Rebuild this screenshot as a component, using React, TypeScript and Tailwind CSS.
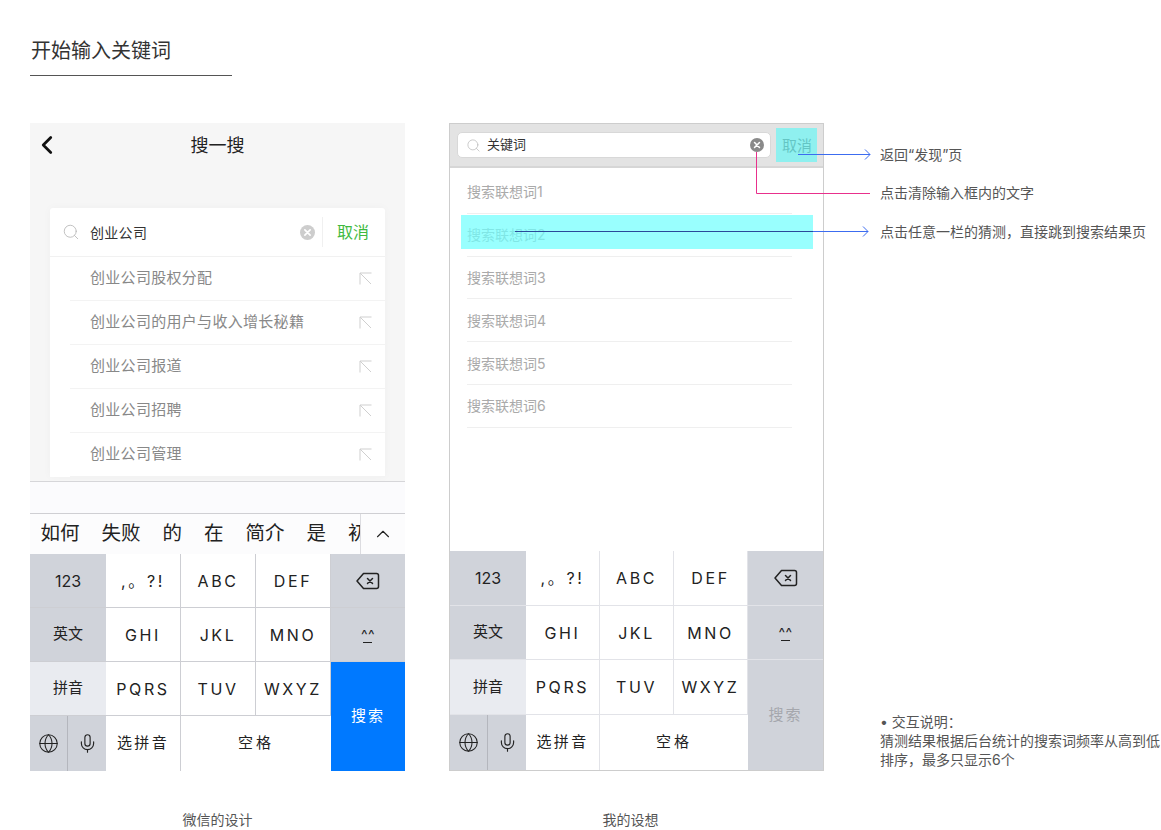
import { Globe, Mic, ChevronLeft, ChevronUp, Search } from "lucide-react";

function BackspaceIcon() {
  return (
    <svg width="24" height="18" viewBox="0 0 24 18" fill="none" stroke="#222" strokeWidth="1.5" strokeLinejoin="round" strokeLinecap="round">
      <path d="M7.5 1.5H20.5a2 2 0 0 1 2 2v11a2 2 0 0 1-2 2H7.5L1 9z" />
      <path d="M11.5 6.5l5 5M16.5 6.5l-5 5" />
    </svg>
  );
}

function ClearIcon({ size, bg }: { size: number; bg: string }) {
  return (
    <svg width={size} height={size} viewBox="0 0 16 16">
      <circle cx="8" cy="8" r="8" fill={bg} />
      <path d="M5.2 5.2l5.6 5.6M10.8 5.2l-5.6 5.6" stroke="#fff" strokeWidth="1.8" strokeLinecap="round" />
    </svg>
  );
}

function JumpIcon() {
  return (
    <svg width="13" height="13" viewBox="0 0 13 13" fill="none" stroke="#cfcfcf" strokeWidth="1">
      <path d="M1 12.5V1h11.5M1 1l11 11" />
    </svg>
  );
}

function Key({ children, className = "" }: { children: React.ReactNode; className?: string }) {
  return <div className={`flex items-center justify-center text-[#222] ${className}`}>{children}</div>;
}

function Keyboard({ grid, line, searchKey }: { grid: string; line: string; searchKey: string }) {
  const gray = "bg-[#d0d3da]";
  const letter = `bg-white text-[16px] tracking-[2.6px] border-r border-b ${line}`;
  const side = `${gray} text-[15px] border-b ${line}`;
  return (
    <div className={`grid shrink-0 ${grid}`}>
      <Key className={`${side} text-[16px]`}>123</Key>
      <Key className={letter}>,。?!</Key>
      <Key className={letter}>ABC</Key>
      <Key className={letter}>DEF</Key>
      <Key className={side}><BackspaceIcon /></Key>

      <Key className={side}>英文</Key>
      <Key className={letter}>GHI</Key>
      <Key className={letter}>JKL</Key>
      <Key className={letter}>MNO</Key>
      <Key className={side}>
        <div className="flex flex-col items-center">
          <span className="h-[12px] text-[14px] leading-[16px] tracking-[0.5px]">^^</span>
          <span className="mt-[3px] h-px w-[9px] bg-[#222]" />
        </div>
      </Key>

      <Key className={`bg-[#e9ebf0] text-[15px] border-b ${line}`}>拼音</Key>
      <Key className={letter}>PQRS</Key>
      <Key className={letter}>TUV</Key>
      <Key className={letter}>WXYZ</Key>
      <Key className={`row-span-2 text-[15px] tracking-[2px] ${searchKey}`}>搜索</Key>

      <div className={`flex ${gray}`}>
        <Key className="w-[38px] border-r border-[#b4b6bd]"><Globe size={21} strokeWidth={1.2} color="#222" /></Key>
        <Key className="flex-1"><Mic size={21} strokeWidth={1.3} color="#222" /></Key>
      </div>
      <Key className={`bg-white text-[15px] tracking-[2.4px] border-r ${line}`}>选拼音</Key>
      <Key className="col-span-2 bg-white text-[15px] tracking-[3px]">空格</Key>
    </div>
  );
}

const wechatRows = ["创业公司股权分配", "创业公司的用户与收入增长秘籍", "创业公司报道", "创业公司招聘", "创业公司管理"];
const candidates = ["如何", "失败", "的", "在", "简介", "是", "初"];
const myRows = ["搜索联想词1", "搜索联想词2", "搜索联想词3", "搜索联想词4", "搜索联想词5", "搜索联想词6"];

function WechatPhone() {
  return (
    <div className="flex h-[648px] w-[375px] shrink-0 flex-col bg-[#fbfbfd]">
      <div className="h-[358px] shrink-0 overflow-hidden bg-[#f6f6f6]">
        <div className="relative flex h-[44px] items-center justify-center">
          <ChevronLeft size={30} strokeWidth={2.2} color="#111" className="absolute left-[2px] top-[7px]" />
          <span className="text-[18px] text-[#222]">搜一搜</span>
        </div>
        <div className="ml-[20px] mt-[41px] w-[335px] rounded-t-[3px] bg-white shadow-[0_0_10px_rgba(0,0,0,0.03)]">
          <div className="flex h-[49px] items-center border-b border-[#f1f1f1] pl-[12px]">
            <Search size={18} strokeWidth={1.1} color="#b5b5b5" className="-scale-x-0 scale-x-100" />
            <span className="ml-[10px] flex-1 text-[14px] tracking-[0.3px] text-[#333]">创业公司</span>
            <ClearIcon size={15} bg="#cdcdcd" />
            <div className="ml-[7px] h-[30px] w-px bg-[#f0f0f0]" />
            <span className="ml-[14px] w-[48px] text-[16px] text-[#3fba3f]">取消</span>
          </div>
          {wechatRows.map((row) => (
            <div key={row} className="ml-[20px] flex h-[44px] items-center border-b border-[#f3f3f3] pl-[20px]">
              <span className="flex-1 text-[15px] tracking-[0.3px] text-[#888]">{row}</span>
              <span className="mr-[13px]"><JumpIcon /></span>
            </div>
          ))}
        </div>
      </div>
      <div className="h-[32px] shrink-0 border-t border-[#d6d6d9] bg-[#fbfbfd]" />
      <div className="flex h-[41px] shrink-0 border-t border-[#cfcfd3] bg-[#fcfcfd]">
        <div className="flex w-[330px] items-center gap-[22px] overflow-hidden pl-[10.5px] text-[19.5px] whitespace-nowrap text-[#222]">
          {candidates.map((word) => (
            <span key={word}>{word}</span>
          ))}
        </div>
        <div className="flex w-[45px] items-center justify-center border-l border-[#dcdce0] bg-[#fcfcfd]">
          <ChevronUp size={22} strokeWidth={1.2} color="#222" />
        </div>
      </div>
      <Keyboard grid="grid-cols-[76px_75px_75px_75px_74px] grid-rows-[54px_54px_54px_55px]" line="border-[#cdced3]" searchKey="bg-[#0079ff] text-white" />
    </div>
  );
}

function MyPhone() {
  return (
    <div className="relative flex h-[648px] w-[375px] shrink-0 flex-col border border-[#cdcdcd] bg-white">
      <div className="flex h-[44px] shrink-0 items-start border-b-2 border-[#d6d6d6] bg-[#e3e3e3] pl-[7px] pt-[8px]">
        <div className="flex h-[26px] w-[314px] items-center rounded-[5px] border border-[#d8d8d8] bg-white pl-[8px] pr-[6px]">
          <Search size={15} strokeWidth={1.1} color="#b5b5b5" />
          <span className="ml-[6px] flex-1 text-[13px] text-[#333]">关键词</span>
          <ClearIcon size={14} bg="#8a8a8a" />
        </div>
        <span className="ml-[11px] mt-[3px] text-[15px] text-[#555]">取消</span>
      </div>
      <div className="flex-1 pt-[3px]">
        {myRows.map((row) => (
          <div key={row} className="ml-[17px] flex h-[42.8px] w-[325px] items-center border-b border-[#efefef] text-[14px] text-[#aaa]">
            {row}
          </div>
        ))}
      </div>
      <Keyboard grid="grid-cols-[76px_74px_74px_74px_75px] grid-rows-[55px_54px_55px_55px]" line="border-[#e2e3e8]" searchKey="bg-[#d0d3da] !text-[#a5a7ad]" />
      <div className="absolute left-[326px] top-[4px] h-[34px] w-[41px] bg-[#6bf5f3]/70" />
      <div className="absolute left-[11px] top-[91px] h-[34px] w-[352px] bg-[#6dfffe]/70" />
    </div>
  );
}

export default function App() {
  return (
    <div className="relative h-[830px] w-[1161px] overflow-hidden bg-white font-['Inter','Noto_Sans_CJK_SC',sans-serif]">
      <div className="ml-[30px] w-[202px] border-b border-[#555] pb-[10px] pt-[37px] pl-px text-[20px] leading-[28px] text-[#333]">
        开始输入关键词
      </div>

      <div className="ml-[30px] mt-[47px] flex">
        <WechatPhone />
        <div className="ml-[44px]"><MyPhone /></div>
        <div className="ml-[56px] flex h-[648px] w-[281px] flex-col text-[14px] leading-[20px] text-[#555]">
          <div className="mt-[22px]">返回“发现”页</div>
          <div className="mt-[18px]">点击清除输入框内的文字</div>
          <div className="mt-[19px]">点击任意一栏的猜测，直接跳到搜索结果页</div>
          <div className="mb-[2px] mt-auto leading-[19px] whitespace-nowrap">
            <div>• 交互说明：</div>
            <div>猜测结果根据后台统计的搜索词频率从高到低</div>
            <div>排序，最多只显示6个</div>
          </div>
        </div>
      </div>

      <div className="ml-[30px] mt-[39px] flex text-[14px] leading-[20px] text-[#555]">
        <div className="w-[375px] text-center">微信的设计</div>
        <div className="ml-[44px] w-[375px] pr-[12px] text-center">我的设想</div>
      </div>

      {/* connector lines */}
      <svg className="pointer-events-none absolute inset-0" width="1161" height="830" fill="none">
        <path d="M798 154.5H870M865 149.5l5 5-5 5" stroke="#3c6cf0" />
        <path d="M756.5 152V193.5H870" stroke="#e8308c" />
        <path d="M515 231.5H813" stroke="#2a4a9a" />
        <path d="M813 231.5H868M863 226.5l5 5-5 5" stroke="#3c6cf0" />
      </svg>
    </div>
  );
}
